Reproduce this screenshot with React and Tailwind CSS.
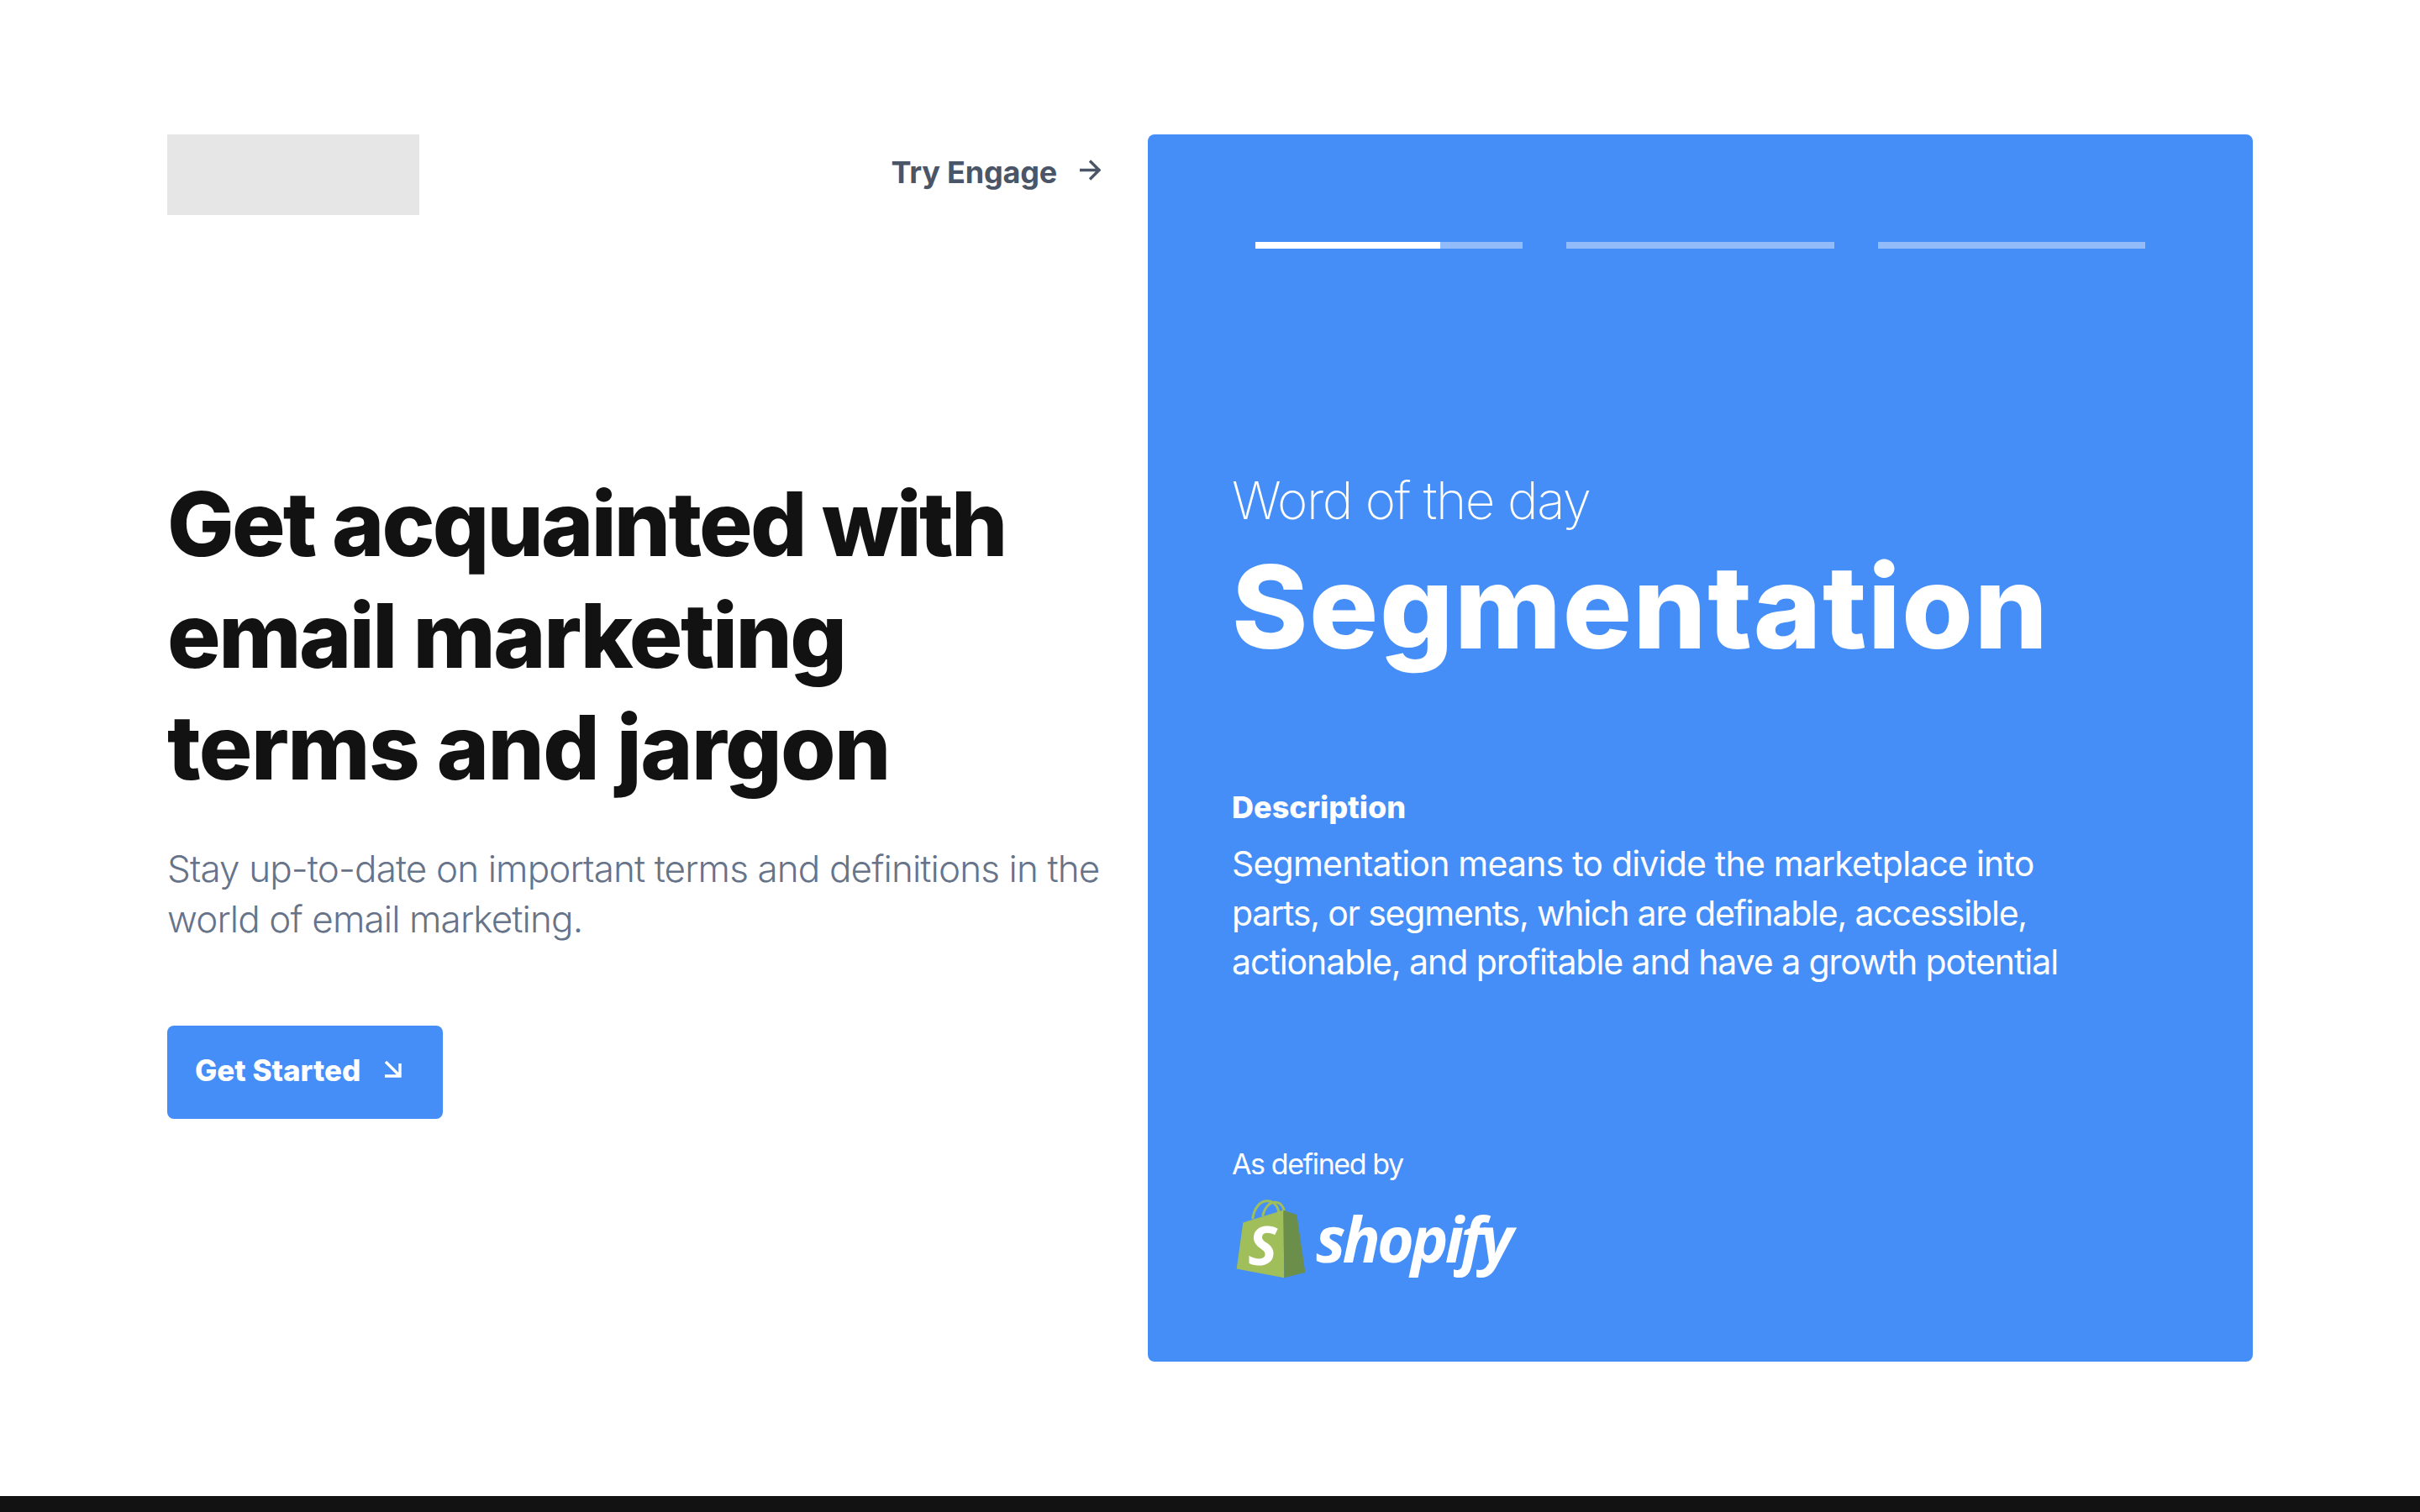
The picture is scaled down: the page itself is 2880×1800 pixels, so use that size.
const sans = { fontFamily: 'Inter, "Liberation Sans", sans-serif' };

function ShopifyBag() {
    return (
        <svg className="w-[85px] h-[97px] shrink-0" viewBox="0 0 255 290">
            <path d="M62 72C68 30 90 8 114 8c26 0 40 20 42 44" fill="none" stroke="#a0bf5b" strokeWidth="9" />
            <path d="M98 62c6-30 24-50 44-50 22 0 32 20 34 36" fill="none" stroke="#a0bf5b" strokeWidth="9" />
            <path d="M28 85 172 40 175 282 5 250Z" fill="#a0bf5b" />
            <path d="M172 40 220 57 250 263 175 282Z" fill="#6b8f4b" />
            <text x="46" y="236" fontSize="196" fontWeight="700" fontStyle="italic" fill="#fff" style={{ fontFamily: '"Open Sans", sans-serif' }}>S</text>
        </svg>
    );
}

export default function App() {
    return (
        <div className="min-h-screen flex flex-col bg-white" style={sans}>
            <div className="flex-1 flex gap-[56px] pl-[199px] pr-[199px] pt-[160px]">
                {/* left column */}
                <div className="w-[1111px] shrink-0">
                    <div className="flex items-center justify-between h-[96px]">
                        <div className="w-[300px] h-[96px] bg-[#e6e6e6]"></div>
                        <a className="flex items-center gap-[27px] text-[36px] font-bold text-[#4a5568] tracking-[-0.2px] -mt-[7px]">
                            Try Engage
                            <svg className="w-[25px] h-[25px] -mt-[5px]" viewBox="0 0 25 25" fill="none" stroke="currentColor" strokeWidth="3.4">
                                <path d="M0 12.5h23M12 1.5l11 11-11 11" />
                            </svg>
                        </a>
                    </div>

                    <h1 className="mt-[301px] text-[106px] leading-[133px] font-extrabold text-[#121212]">
                        <span className="block tracking-[-2.8px]">Get acquainted with</span>
                        <span className="block tracking-[-2.5px]">email marketing</span>
                        <span className="block tracking-[-1.6px]">terms and jargon</span>
                    </h1>

                    <p className="mt-[48px] text-[44px] leading-[60px] font-light text-[#667389] tracking-[-0.87px]">
                        Stay up-to-date on important terms and definitions in the
                        <br />
                        world of email marketing.
                    </p>

                    <button className="mt-[97px] w-[328px] h-[111px] rounded-[8px] bg-[#458ef7] text-white flex items-center pl-[33px] gap-[29px] text-[35px] font-extrabold">
                        <span className="-mt-[4px]">Get Started</span>
                        <svg className="w-[20px] h-[20px] -mt-[8px]" viewBox="0 0 20 20" fill="none" stroke="currentColor" strokeWidth="3.4">
                            <path d="M1 1l17 17M0 18h18V3" />
                        </svg>
                    </button>
                </div>

                {/* word card */}
                <div className="w-[1315px] h-[1461px] shrink-0 rounded-[8px] bg-[#458ef7] text-white">
                    <div className="flex gap-[52px] mx-[128px] mt-[128px]">
                        <div className="flex-1 h-[8px] bg-[#92bbfa]">
                            <div className="w-[69%] h-full bg-white"></div>
                        </div>
                        <div className="flex-1 h-[8px] bg-[#92bbfa]"></div>
                        <div className="flex-1 h-[8px] bg-[#92bbfa]"></div>
                    </div>

                    <div className="pl-[100px] pr-[90px]">
                        <div className="mt-[262px] text-[62px] leading-[76px] font-extralight tracking-[-1.5px]">Word of the day</div>
                        <div className="mt-[8px] text-[137px] leading-[160px] font-extrabold tracking-[1.6px]">Segmentation</div>

                        <div className="pt-[137px] text-[36px] leading-[44px] font-extrabold">Description</div>
                        <p className="mt-[16px] text-[41px] leading-[58.7px] font-normal">
                            <span className="block tracking-[-0.8px]">Segmentation means to divide the marketplace into</span>
                            <span className="block tracking-[-1.2px]">parts, or segments, which are definable, accessible,</span>
                            <span className="block tracking-[-1.07px]">actionable, and profitable and have a growth potential</span>
                        </p>

                        <div className="mt-[189px] text-[34px] leading-[44px] tracking-[-1.4px]">As defined by</div>
                        <div className="flex items-center gap-[11px] mt-[19px] ml-[4px]">
                            <ShopifyBag />
                            <span className="text-[75px] leading-[90px] font-bold italic tracking-[-3.9px] -mt-[4px]" style={{ fontFamily: '"Open Sans", sans-serif' }}>shopify</span>
                        </div>
                    </div>
                </div>
            </div>
            <div className="h-[19px] bg-[#121212]"></div>
        </div>
    );
}
